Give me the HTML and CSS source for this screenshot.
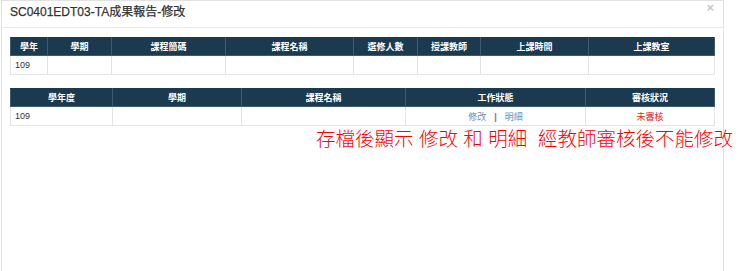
FILE: index.html
```html
<!DOCTYPE HTML>
<html>
<head>
  <meta charset="UTF-8">
  <title>SC0401EDT03-TA成果報告-修改</title>
  <link rel="stylesheet" href="styles.css">
</head>
<body>
  <div class="modal">
    <div class="modal-header">
      <h4 class="modal-title">SC0401EDT03-TA成果報告-修改</h4>
      <span class="close">&times;</span>
    </div>
    <div class="modal-body">
      <table class="grid grid-course">
        <colgroup>
          <col style="width:37px"><col style="width:64px"><col style="width:114px"><col style="width:128px">
          <col style="width:64px"><col style="width:63px"><col style="width:108px"><col style="width:126px">
        </colgroup>
        <thead>
          <tr>
            <th>學年</th>
            <th>學期</th>
            <th>課程簡碼</th>
            <th>課程名稱</th>
            <th>選修人數</th>
            <th>授課教師</th>
            <th>上課時間</th>
            <th>上課教室</th>
          </tr>
        </thead>
        <tbody>
          <tr>
            <td>109</td>
            <td></td>
            <td></td>
            <td></td>
            <td></td>
            <td></td>
            <td></td>
            <td></td>
          </tr>
        </tbody>
      </table>

      <table class="grid grid-report">
        <colgroup>
          <col style="width:102px"><col style="width:129px"><col style="width:164px"><col style="width:180px"><col style="width:129px">
        </colgroup>
        <thead>
          <tr>
            <th>學年度</th>
            <th>學期</th>
            <th>課程名稱</th>
            <th>工作狀態</th>
            <th>審核狀況</th>
          </tr>
        </thead>
        <tbody>
          <tr>
            <td>109</td>
            <td></td>
            <td></td>
            <td class="center"><a href="#" class="link">修改</a><span class="sep">|</span><a href="#" class="link">明細</a></td>
            <td class="center status">未審核</td>
          </tr>
        </tbody>
      </table>

      <div class="note">存檔後顯示 修改 和 明細&nbsp; 經教師審核後不能修改</div>
    </div>
  </div>
</body>
</html>
```

FILE: styles.css
```css
body {
  margin: 0;
  background-color: #ffffff;
  font-family: "Liberation Sans", Arial, "Noto Sans CJK TC", sans-serif;
  color: #333333;
  overflow: hidden;
}
.modal {
  margin-left: 1px;
  width: 723px;
  height: 271px;
  box-sizing: border-box;
  border: 1px solid #e2e2e2;
  border-bottom: none;
}
.modal-header {
  position: relative;
  height: 26px;
  border-bottom: 1px solid #eaeaea;
  padding: 0 8px;
  display: flex;
  align-items: center;
}
.modal-title {
  margin: 0;
  font-size: 12px;
  font-weight: normal;
  color: #333333;
  line-height: 16px;
  -webkit-text-stroke: 0.25px #333333;
  margin-top: -4px;
}
.close {
  position: absolute;
  right: 9px;
  top: 0;
  font-size: 13px;
  font-weight: bold;
  color: #c8c8c8;
  line-height: 14px;
}
.modal-body {
  padding: 9px 8px 0 8px;
}
.grid {
  border-collapse: collapse;
  table-layout: fixed;
  width: 704px;
  font-size: 9px;
}
.grid th {
  background-color: #1b3a4f;
  color: #ffffff;
  font-weight: bold;
  height: 17px;
  padding: 0 3px;
  border: 1px solid #3f5a6d;
  border-top-color: #1b3a4f;
  text-align: center;
}
.grid td {
  height: 18px;
  padding: 0 4px;
  border: 1px solid #e4e4e4;
  color: #333333;
}
.grid-report {
  margin-top: 13px;
}
.center {
  text-align: center;
}
.link {
  color: #6a8fb3;
  text-decoration: none;
}
.sep {
  color: #777777;
  margin: 0 8px;
  font-weight: bold;
}
.grid td.status {
  color: #ee2222;
}
.note {
  margin-top: 1px;
  padding-left: 306px;
  white-space: nowrap;
  font-size: 19.5px;
  line-height: 24px;
  font-weight: 300;
  color: #ff0000;
  font-family: "Liberation Sans", "Noto Sans CJK TC", sans-serif;
}
```
